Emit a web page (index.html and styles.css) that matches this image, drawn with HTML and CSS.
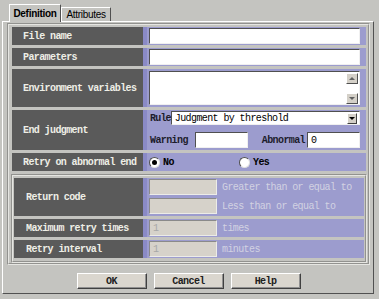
FILE: index.html
```html
<!DOCTYPE html>
<html lang="en">
<head>
  <meta charset="UTF-8">
  <title>Definition</title>
  <link rel="stylesheet" href="styles.css">
</head>
<body>
  <div class="window">
    <div class="tabs">
      <div class="tab active">Definition</div>
      <div class="tab">Attributes</div>
    </div>

    <div class="panel">
      <div class="frame">
        <div class="row">
          <div class="label">File name</div>
          <div class="value"><div class="field"></div></div>
        </div>

        <div class="row">
          <div class="label">Parameters</div>
          <div class="value"><div class="field"></div></div>
        </div>

        <div class="row tall">
          <div class="label">Environment variables</div>
          <div class="value">
            <div class="field area">
              <div class="scroll">
                <span class="sbtn up"></span>
                <span class="sbtn down"></span>
              </div>
            </div>
          </div>
        </div>

        <div class="row judge">
          <div class="label">End judgment</div>
          <div class="value stack">
            <div class="line">
              <span class="cap rule">Rule</span>
              <div class="field select">
                <span>Judgment by threshold</span>
                <span class="drop"></span>
              </div>
            </div>
            <div class="line">
              <span class="cap warn">Warning</span>
              <div class="field small"></div>
              <span class="cap abn">Abnormal</span>
              <div class="field small">0</div>
            </div>
          </div>
        </div>

        <div class="row">
          <div class="label">Retry on abnormal end</div>
          <div class="value">
            <label class="option"><span class="radio checked"></span>No</label>
            <label class="option"><span class="radio"></span>Yes</label>
          </div>
        </div>

        <div class="group">
          <div class="row tall">
            <div class="label">Return code</div>
            <div class="value stack">
              <div class="line">
                <div class="field off"></div>
                <span class="dim">Greater than or equal to</span>
              </div>
              <div class="line">
                <div class="field off"></div>
                <span class="dim">Less than or equal to</span>
              </div>
            </div>
          </div>

          <div class="row">
            <div class="label">Maximum retry times</div>
            <div class="value">
              <div class="field off">1</div>
              <span class="dim">times</span>
            </div>
          </div>

          <div class="row">
            <div class="label">Retry interval</div>
            <div class="value">
              <div class="field off">1</div>
              <span class="dim">minutes</span>
            </div>
          </div>
        </div>
      </div>

      <div class="buttons">
        <button class="btn">OK</button>
        <button class="btn">Cancel</button>
        <button class="btn">Help</button>
      </div>
    </div>
  </div>
</body>
</html>
```

FILE: styles.css
```css
* {
  box-sizing: border-box;
}

body {
  margin: 0;
  background-color: #c4c4c0;
  font-family: "Liberation Mono", monospace;
  font-size: 10px;
  letter-spacing: -0.6px;
}

.window {
  width: 379px;
  height: 299px;
  padding-top: 4px;
}

.tabs {
  display: flex;
  align-items: flex-end;
  height: 17px;
  padding-left: 9px;
  position: relative;
  z-index: 1;
}

.tab {
  display: flex;
  align-items: center;
  justify-content: center;
  width: 50px;
  height: 14px;
  font-family: "Liberation Sans", Arial, sans-serif;
  font-size: 10px;
  letter-spacing: -0.3px;
  color: #000;
  border: 1px solid;
  border-color: #fff #505050 transparent #fff;
  border-bottom: none;
}

.tab.active {
  width: 52px;
  height: 18px;
  margin-bottom: -1px;
  font-weight: bold;
  background-color: #c4c4c0;
}

.panel {
  margin-left: 2px;
  width: 372px;
  height: 273px;
  border: 1px solid;
  border-color: #fff #505050 #505050 #fff;
  padding: 1px 3px 5px 4px;
}

.frame {
  display: flex;
  flex-direction: column;
  gap: 3px;
  border: 2px groove #e6e6e2;
  padding: 2px 2px 0 3px;
}

.row {
  display: flex;
  height: 18px;
}

.row.tall {
  height: 38px;
}

.row.judge {
  height: 40px;
}

.label {
  flex: 0 0 131px;
  display: flex;
  align-items: center;
  padding-left: 11px;
  background-color: #5a5a5a;
  color: #eeeee6;
  font-weight: bold;
}

.value {
  flex: 1;
  display: flex;
  align-items: center;
  padding: 0 6px;
  background-color: #9c9cce;
  box-shadow: inset 4px 0 0 #8a8ac6;
}

.value.stack {
  flex-direction: column;
  align-items: stretch;
  justify-content: flex-start;
}

.judge .stack {
  padding-top: 1px;
  gap: 7px;
}

.group .stack {
  padding-top: 1px;
  gap: 3px;
}

.line {
  display: flex;
  align-items: center;
}

.field {
  display: flex;
  align-items: center;
  width: 100%;
  height: 16px;
  padding-left: 3px;
  background-color: #fff;
  border: 1px solid;
  border-color: #505050 #f0f0f0 #f0f0f0 #505050;
  color: #000;
}

.field.area {
  height: 34px;
  justify-content: flex-end;
  align-items: stretch;
}

.scroll {
  display: flex;
  flex-direction: column;
  justify-content: space-between;
  padding: 1px 1px 0 0;
}

.sbtn {
  display: flex;
  align-items: center;
  justify-content: center;
  width: 12px;
  height: 11px;
  background-color: #d4d0c8;
  border: 1px solid;
  border-color: #fff #505050 #505050 #fff;
}

.sbtn::after {
  content: "";
  border-left: 3px solid transparent;
  border-right: 3px solid transparent;
}

.sbtn.up::after {
  border-bottom: 3px solid #606060;
}

.sbtn.down::after {
  border-top: 3px solid #606060;
}

.cap {
  color: #1c1c2c;
  font-weight: bold;
}

.rule {
  padding-left: 1px;
  width: 24px;
  letter-spacing: -0.8px;
}

.warn {
  padding-left: 1px;
  width: 46px;
}

.abn {
  margin-left: auto;
  margin-right: 2px;
}

.field.select {
  height: 14px;
  justify-content: space-between;
  padding: 0 2px 0 3px;
}

.drop {
  display: flex;
  align-items: center;
  justify-content: center;
  width: 10px;
  height: 11px;
  background-color: #d4d0c8;
  border: 1px solid;
  border-color: #fff #404040 #404040 #fff;
}

.drop::after {
  content: "";
  border-left: 3px solid transparent;
  border-right: 3px solid transparent;
  border-top: 3px solid #000;
}

.field.small {
  width: 53px;
  flex: 0 0 53px;
}

.option {
  display: flex;
  align-items: center;
  gap: 3px;
  width: 90px;
  color: #000;
  font-weight: bold;
}

.radio {
  width: 11px;
  height: 11px;
  border-radius: 50%;
  background-color: #fff;
  border: 1px solid;
  border-color: #505050 #e0e0e0 #e0e0e0 #505050;
  display: flex;
  align-items: center;
  justify-content: center;
}

.radio.checked::after {
  content: "";
  width: 5px;
  height: 5px;
  border-radius: 50%;
  background-color: #000;
}

.group {
  display: flex;
  flex-direction: column;
  gap: 3px;
  margin: 0 -1px;
  border: 2px groove #e6e6e2;
  padding: 2px 1px 3px 1px;
}

.group .label {
  flex-basis: 129px;
  padding-left: 12px;
}

.field.off {
  width: 68px;
  flex: 0 0 68px;
  background-color: #d6d2ca;
  border-color: #8a8a8a #ecece8 #ecece8 #8a8a8a;
  color: #a8a8a8;
}

.dim {
  margin-left: 5px;
  color: #d2d2e2;
}

.buttons {
  display: flex;
  justify-content: center;
  gap: 7px;
  margin-top: 8px;
}

.btn {
  width: 70px;
  height: 16px;
  padding: 0;
  background-color: #dad6ce;
  border: 1px solid;
  border-color: #fff #404040 #404040 #fff;
  box-shadow: inset -1px -1px 0 #909090;
  font-family: "Liberation Mono", monospace;
  font-size: 10px;
  font-weight: bold;
  letter-spacing: -0.6px;
  color: #202020;
}
```
